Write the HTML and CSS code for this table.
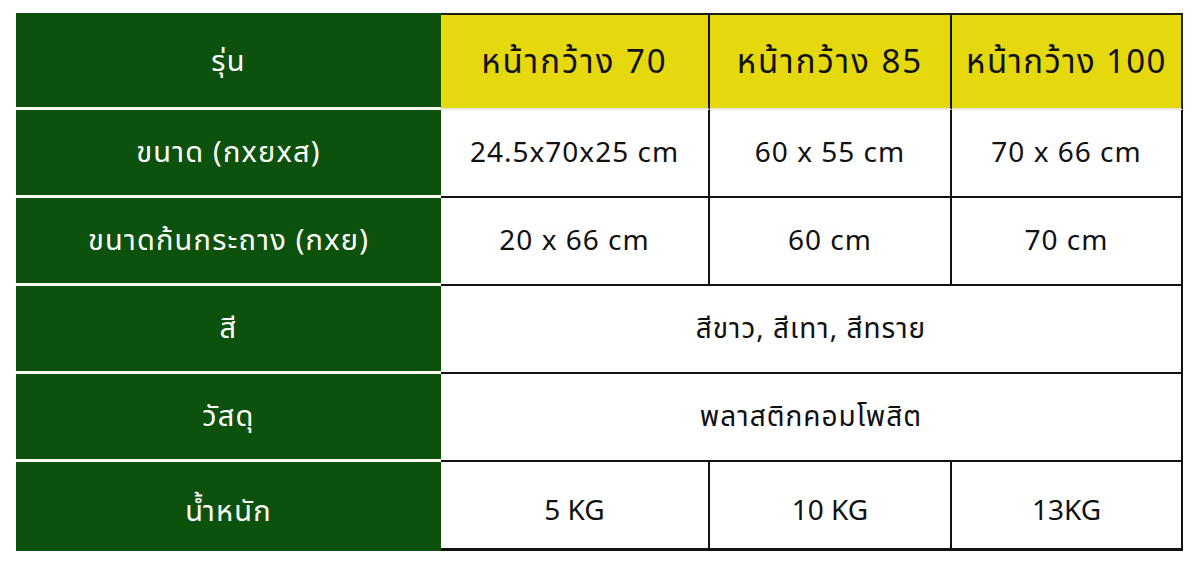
FILE: index.html
```html
<!DOCTYPE html>
<html lang="th">
<head>
<meta charset="utf-8">
<title>ตารางขนาด</title>
<link rel="stylesheet" href="styles.css">
</head>
<body>
<table class="spec">
  <colgroup>
    <col class="c1"><col class="c2"><col class="c3"><col class="c4">
  </colgroup>
  <tr class="head">
    <th class="label">รุ่น</th>
    <th class="model">หน้ากว้าง 70</th>
    <th class="model">หน้ากว้าง 85</th>
    <th class="model last">หน้ากว้าง 100</th>
  </tr>
  <tr class="row">
    <th class="label">ขนาด (กxยxส)</th>
    <td>24.5x70x25 cm</td>
    <td>60 x 55 cm</td>
    <td class="last">70 x 66 cm</td>
  </tr>
  <tr class="row">
    <th class="label">ขนาดก้นกระถาง (กxย)</th>
    <td>20 x 66 cm</td>
    <td>60 cm</td>
    <td class="last">70 cm</td>
  </tr>
  <tr class="row">
    <th class="label">สี</th>
    <td colspan="3" class="last">สีขาว, สีเทา, สีทราย</td>
  </tr>
  <tr class="row">
    <th class="label">วัสดุ</th>
    <td colspan="3" class="last">พลาสติกคอมโพสิต</td>
  </tr>
  <tr class="row end">
    <th class="label">น้ำหนัก</th>
    <td class="kg">5 KG</td>
    <td class="kg">10 KG</td>
    <td class="kg last">13KG</td>
  </tr>
</table>
</body>
</html>
```

FILE: styles.css
```css
html, body {
  margin: 0;
  padding: 0;
  background: #ffffff;
}
body {
  padding: 13px 0 0 16px;
  font-family: "Noto Sans Thai", "Noto Sans Thai UI", "Noto Sans", sans-serif;
}
.spec {
  border-collapse: separate;
  border-spacing: 0;
  table-layout: fixed;
  width: 1167px;
}
.c1 { width: 425px; }
.c2 { width: 269px; }
.c3 { width: 242px; }
.c4 { width: 231px; }

.spec th, .spec td {
  padding: 0;
  text-align: center;
  vertical-align: middle;
  font-weight: 400;
  box-sizing: border-box;
  white-space: nowrap;
}
.label {
  background: #0d520c;
  color: #ffffff;
  font-size: 29px;
  letter-spacing: 1.2px;
  border-bottom: 3px solid #f4f6f0;
}
.row.end .label { border-bottom: 0; height: 86px; padding-top: 10px; }
.head th { height: 97px; padding-top: 3px; }
.head .label { height: 97px; }
.model {
  background: #e5d90e;
  color: #111111;
  font-size: 33px;
  letter-spacing: 2px;
  border-top: 2px solid #1e1e10;
  border-right: 2px solid #111111;
  border-bottom: 2px solid #e9e9d8;
}
.model.last { border-right: 2px solid #222222; letter-spacing: 1.4px; }
.row td {
  background: #ffffff;
  color: #111111;
  font-size: 28px;
  letter-spacing: 1px;
  height: 88px;
  border-right: 2px solid #111111;
  border-bottom: 2px solid #111111;
}
.row .label { height: 88px; }
.row td.kg { padding-top: 12px; letter-spacing: 0; }
.row.end td { border-bottom: 3px solid #111111; height: 89px; }
```
